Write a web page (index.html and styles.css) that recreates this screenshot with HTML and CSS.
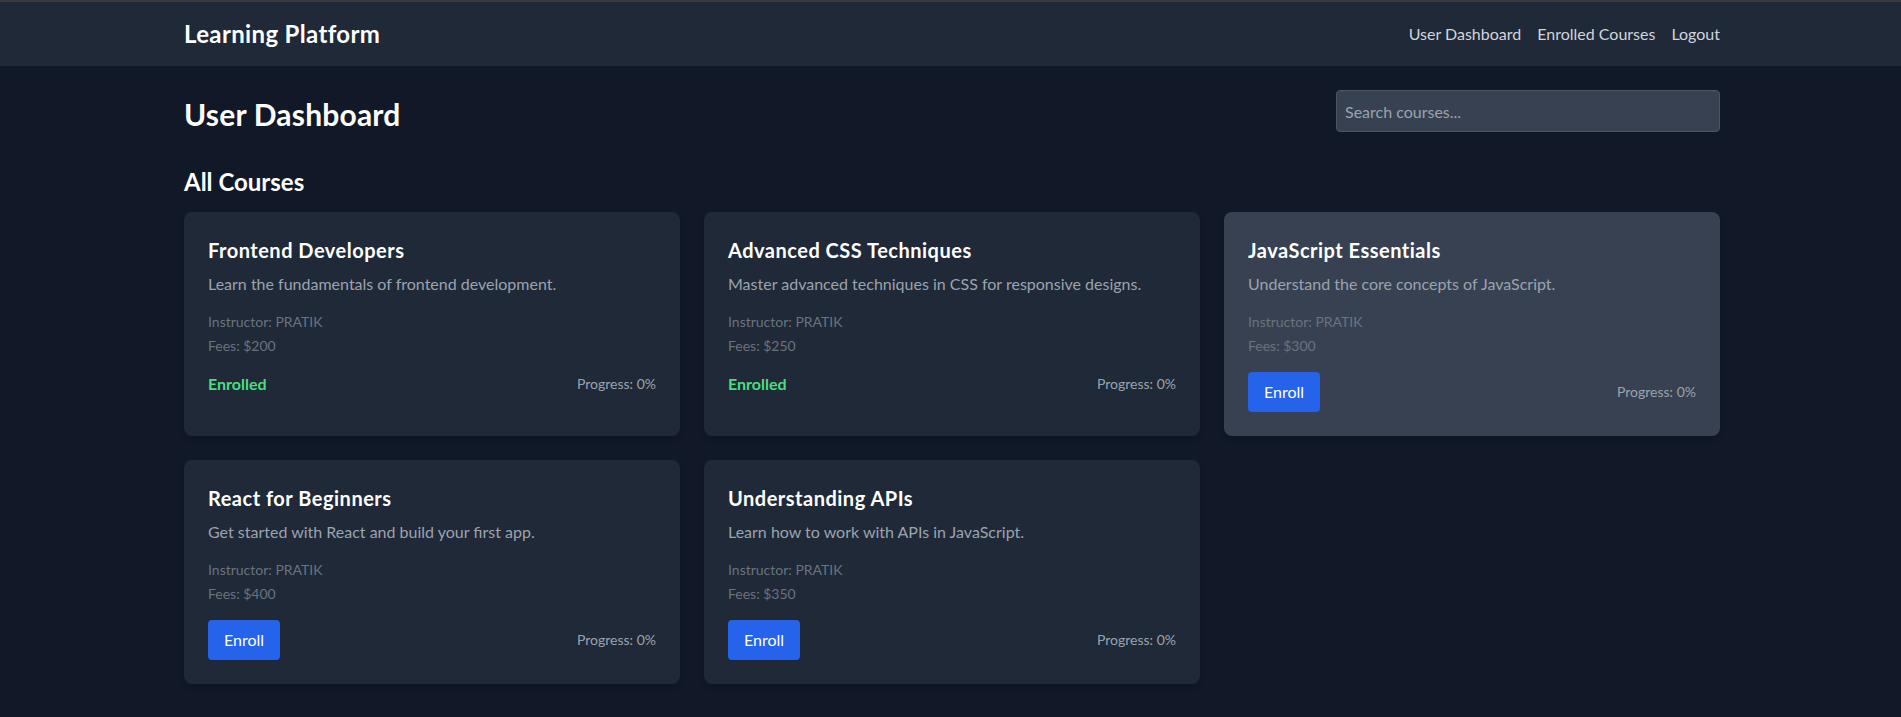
FILE: index.html
```html
<!DOCTYPE html>
<html lang="en">
<head>
<meta charset="utf-8">
<title>Learning Platform</title>
<link rel="stylesheet" href="styles.css">
</head>
<body>
<nav class="navbar">
  <div class="nav-inner">
    <a class="brand" href="#">Learning Platform</a>
    <div class="nav-links">
      <a href="#">User Dashboard</a>
      <a href="#">Enrolled Courses</a>
      <a href="#">Logout</a>
    </div>
  </div>
</nav>
<main class="container">
  <div class="page-header">
    <h1 class="page-title">User Dashboard</h1>
    <input class="search" type="text" placeholder="Search courses...">
  </div>
  <h2 class="section-title">All Courses</h2>
  <div class="course-grid">
    <div class="card">
      <h3 class="card-title">Frontend Developers</h3>
      <p class="card-desc">Learn the fundamentals of frontend development.</p>
      <p class="card-meta">Instructor: PRATIK</p>
      <p class="card-meta">Fees: $200</p>
      <div class="card-footer">
        <span class="enrolled">Enrolled</span>
        <span class="progress">Progress: 0%</span>
      </div>
    </div>
    <div class="card">
      <h3 class="card-title">Advanced CSS Techniques</h3>
      <p class="card-desc">Master advanced techniques in CSS for responsive designs.</p>
      <p class="card-meta">Instructor: PRATIK</p>
      <p class="card-meta">Fees: $250</p>
      <div class="card-footer">
        <span class="enrolled">Enrolled</span>
        <span class="progress">Progress: 0%</span>
      </div>
    </div>
    <div class="card card-hover">
      <h3 class="card-title">JavaScript Essentials</h3>
      <p class="card-desc">Understand the core concepts of JavaScript.</p>
      <p class="card-meta">Instructor: PRATIK</p>
      <p class="card-meta">Fees: $300</p>
      <div class="card-footer">
        <button class="btn-enroll" type="button">Enroll</button>
        <span class="progress">Progress: 0%</span>
      </div>
    </div>
    <div class="card">
      <h3 class="card-title">React for Beginners</h3>
      <p class="card-desc">Get started with React and build your first app.</p>
      <p class="card-meta">Instructor: PRATIK</p>
      <p class="card-meta">Fees: $400</p>
      <div class="card-footer">
        <button class="btn-enroll" type="button">Enroll</button>
        <span class="progress">Progress: 0%</span>
      </div>
    </div>
    <div class="card">
      <h3 class="card-title">Understanding APIs</h3>
      <p class="card-desc">Learn how to work with APIs in JavaScript.</p>
      <p class="card-meta">Instructor: PRATIK</p>
      <p class="card-meta">Fees: $350</p>
      <div class="card-footer">
        <button class="btn-enroll" type="button">Enroll</button>
        <span class="progress">Progress: 0%</span>
      </div>
    </div>
  </div>
</main>
</body>
</html>
```

FILE: styles.css
```css
* { box-sizing: border-box; }

body {
  margin: 0;
  background: #111827;
  color: #ffffff;
  font-family: Lato, "Noto Sans", sans-serif;
  min-height: 717px;
}

.navbar {
  background: #1f2937;
  border-top: 2px solid #3a3a3a;
  padding: 16px 0;
}

.nav-inner {
  width: 1539px;
  padding-left: 3px;
  margin: 0 auto;
  display: flex;
  justify-content: space-between;
  align-items: center;
}

.brand {
  color: #ffffff;
  text-decoration: none;
  font-size: 24px;
  line-height: 32px;
  font-weight: 700;
  letter-spacing: 0.35px;
}

.nav-links {
  display: flex;
  gap: 16px;
}

.nav-links a {
  color: #d1d5db;
  text-decoration: none;
  font-size: 16px;
  line-height: 24px;
}

.container {
  width: 1539px;
  padding-left: 3px;
  margin: 0 auto;
  padding-top: 24px;
}

.page-header {
  display: flex;
  justify-content: space-between;
  align-items: flex-end;
  margin-bottom: 32px;
}

.page-title {
  margin: 0;
  font-size: 30px;
  line-height: 36px;
  font-weight: 700;
  letter-spacing: 0.2px;
}

.search {
  width: 384px;
  height: 42px;
  padding: 8px;
  background: #374151;
  border: 1px solid #4b5563;
  border-radius: 4px;
  color: #ffffff;
  font-family: inherit;
  font-size: 16px;
  line-height: 24px;
  outline: none;
}

.search::placeholder { color: #9ca3af; }

.section-title {
  margin: 0 0 12px;
  font-size: 24px;
  line-height: 36px;
  font-weight: 700;
}

.course-grid {
  display: grid;
  grid-template-columns: repeat(3, 1fr);
  gap: 24px;
}

.card {
  background: #1f2937;
  border-radius: 8px;
  padding: 24px;
  box-shadow: 0 4px 6px -1px rgba(0,0,0,0.1), 0 2px 4px -2px rgba(0,0,0,0.1);
}

.card-hover { background: #374151; }

.card-title {
  margin: 0 0 8px;
  font-size: 20px;
  line-height: 28px;
  font-weight: 700;
  letter-spacing: 0.5px;
  color: #ffffff;
}

.card-desc {
  margin: 0 0 16px;
  font-size: 16px;
  line-height: 24px;
  color: #9ca3af;
}

.card-meta {
  margin: 0 0 4px;
  font-size: 14px;
  line-height: 20px;
  color: #6b7280;
}

.card-footer {
  margin-top: 16px;
  display: flex;
  justify-content: space-between;
  align-items: center;
}

.enrolled {
  color: #4ade80;
  font-size: 16px;
  line-height: 24px;
  font-weight: 700;
}

.progress {
  color: #9ca3af;
  font-size: 14px;
  line-height: 20px;
}

.btn-enroll {
  background: #2563eb;
  color: #ffffff;
  border: none;
  border-radius: 4px;
  padding: 8px 16px;
  font-family: inherit;
  font-size: 16px;
  line-height: 24px;
  cursor: pointer;
}
```
